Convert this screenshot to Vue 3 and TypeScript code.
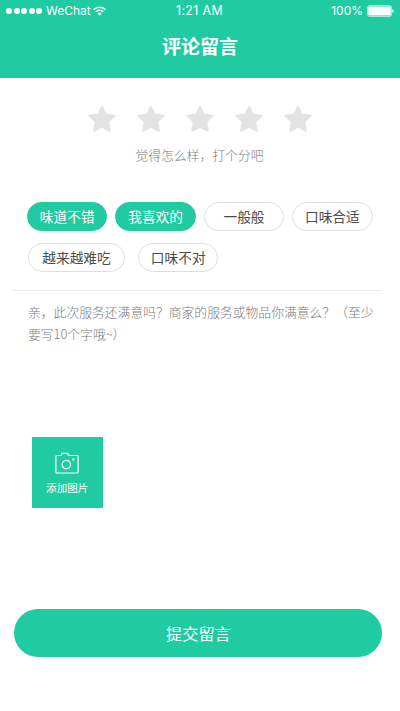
<script setup lang="ts">
import { ref } from 'vue'

interface Tag {
  label: string
  wide?: boolean
  selected: boolean
}

const score = ref<number>(0)
const stars: number[] = [1, 2, 3, 4, 5]

const tagRows = ref<Tag[][]>([
  [
    { label: '味道不错', selected: true },
    { label: '我喜欢的', selected: true },
    { label: '一般般', selected: false },
    { label: '口味合适', selected: false },
  ],
  [
    { label: '越来越难吃', wide: true, selected: false },
    { label: '口味不对', selected: false },
  ],
])

const comment = ref<string>('')
</script>

<template>
  <div class="page">
    <header class="header">
      <div class="status">
        <div class="status-left">
          <span class="signal"><i v-for="n in 5" :key="n" class="dot"></i></span>
          <span class="carrier">WeChat</span>
          <svg class="wifi" viewBox="0 0 13 10" width="13" height="10">
            <path d="M0.7 3.6 A8.2 8.2 0 0 1 12.3 3.6" fill="none" stroke="#fff" stroke-width="1.6" />
            <path d="M2.8 5.8 A5.2 5.2 0 0 1 10.2 5.8" fill="none" stroke="#fff" stroke-width="1.5" />
            <path d="M6.5 9.7 L4.4 7.5 A2.9 2.9 0 0 1 8.6 7.5 Z" fill="#fff" />
          </svg>
        </div>
        <span class="time">1:21 AM</span>
        <div class="status-right">
          <span>100%</span>
          <svg class="battery" viewBox="0 0 27 12" width="27" height="12">
            <rect x="0.5" y="0.5" width="24" height="11" rx="2" fill="none" stroke="#fff" stroke-opacity="0.6" />
            <rect x="1.2" y="1.5" width="22.6" height="9" rx="1" fill="#fff" />
            <path d="M25.3 4 Q26.6 4.6 26.6 6 T25.3 8 Z" fill="#fff" />
          </svg>
        </div>
      </div>
      <h1 class="title">评论留言</h1>
    </header>

    <section class="rating">
      <div class="stars">
        <svg
          v-for="n in stars"
          :key="n"
          class="star"
          :class="{ lit: n <= score }"
          viewBox="0 0 28 28"
          @click="score = n"
        >
          <path
            d="M14 1.8 L17.7 9.6 L26.6 10.8 L20.2 16.9 L21.8 25.8 L14 21.5 L6.2 25.8 L7.8 16.9 L1.4 10.8 L10.3 9.6 Z"
            stroke-width="2"
            stroke-linejoin="round"
          />
        </svg>
      </div>
      <p class="hint">觉得怎么样，打个分吧</p>
    </section>

    <section class="tags">
      <div v-for="(row, i) in tagRows" :key="i" class="tag-row">
        <button
          v-for="tag in row"
          :key="tag.label"
          class="tag"
          :class="{ selected: tag.selected, wide: tag.wide }"
          @click="tag.selected = !tag.selected"
        >
          {{ tag.label }}
        </button>
      </div>
    </section>

    <section class="message">
      <textarea
        v-model="comment"
        class="input"
        placeholder="亲，此次服务还满意吗？商家的服务或物品你满意么？（至少要写10个字哦~）"
      ></textarea>
    </section>

    <button class="upload">
      <svg class="camera" viewBox="0 0 24 22" width="24" height="22">
        <g fill="none" stroke="#fff" stroke-width="1.2" stroke-linejoin="round">
          <path d="M7 3.5 H2 Q0.9 3.5 0.9 4.6 V19.9 Q0.9 21 2 21 H22 Q23.1 21 23.1 19.9 V4.6 Q23.1 3.5 22 3.5 H13.5" />
          <path d="M6.6 3.5 V1.3 H13 V3.5" />
          <circle cx="11.3" cy="12.6" r="4.2" />
        </g>
        <circle cx="18.3" cy="7.4" r="1.2" fill="#fff" />
      </svg>
      <span>添加图片</span>
    </button>

    <button class="submit">提交留言</button>
  </div>
</template>

<style>
body {
  background: #fff;
}
</style>

<style scoped>
.page {
  display: flex;
  flex-direction: column;
  box-sizing: border-box;
  width: 400px;
  height: 711px;
  overflow: hidden;
  background: #fff;
  font-family: "Noto Sans CJK SC", sans-serif;
  text-spacing-trim: space-all;
}

button {
  display: flex;
  align-items: center;
  justify-content: center;
  box-sizing: border-box;
  margin: 0;
  padding: 0;
  border: 0;
  font-family: inherit;
  cursor: pointer;
}

.header {
  box-sizing: border-box;
  height: 78px;
  flex: none;
  background: #21cba1;
  border-bottom: 1px solid #1bc79b;
  color: #fff;
}

.status {
  display: grid;
  grid-template-columns: 1fr auto 1fr;
  align-items: center;
  height: 22px;
  padding: 0 6px;
  font-family: Inter, Roboto, sans-serif;
  font-size: 12px;
  line-height: 22px;
}

.time {
  font-size: 12.4px;
  letter-spacing: 0.35px;
  margin-right: 1px;
}

.status-left,
.status-right {
  display: flex;
  align-items: center;
}

.status-right {
  justify-content: flex-end;
  gap: 4px;
}

.signal {
  display: flex;
  gap: 1.5px;
  margin-right: 4px;
}

.dot {
  width: 6px;
  height: 6px;
  border-radius: 50%;
  background: #fff;
}

.wifi {
  margin-left: 2px;
}

.title {
  margin: 12px 0 0;
  font-size: 19px;
  font-weight: 700;
  line-height: 24px;
  text-align: center;
}

.rating {
  display: flex;
  flex-direction: column;
  align-items: center;
  padding-top: 27px;
}

.stars {
  display: flex;
  gap: 21px;
}

.star {
  width: 28px;
  height: 28px;
  fill: #e3e3e3;
  stroke: #e3e3e3;
}

.star.lit {
  fill: #ffc53d;
  stroke: #ffc53d;
}

.hint {
  margin: 12px 1px 1px 0;
  color: #7c7c7c;
  font-size: 12.8px;
  font-weight: 300;
  line-height: 20px;
}

.tags {
  display: flex;
  flex-direction: column;
  gap: 12px;
  padding: 36px 27px 0;
}

.tag-row {
  display: flex;
  gap: 8px;
}

.tag-row + .tag-row {
  gap: 13px;
  padding-left: 1px;
}

.tag {
  width: 80.4px;
  height: 29px;
  padding-bottom: 2px;
  border: 1px solid #dedede;
  border-radius: 15px;
  background: #fff;
  color: #4c4c4c;
  font-size: 13.7px;
  line-height: 20px;
}

.tag.wide {
  width: 97px;
}

.tag.selected {
  border-color: #21cba1;
  background: #21cba1;
  color: #fff;
}

.message {
  height: 146px;
  margin: 18px 18px 0 13px;
  border-top: 1px solid #ebebeb;
}

.input {
  display: block;
  box-sizing: border-box;
  width: 366px;
  height: 120px;
  margin: 0;
  padding: 10px 0 0 15px;
  border: 0;
  outline: 0;
  background: transparent;
  color: #555;
  font-family: inherit;
  font-size: 12.8px;
  font-weight: 300;
  line-height: 22px;
  resize: none;
  text-spacing-trim: space-all;
}

.input::placeholder {
  color: #7c7c7c;
  opacity: 1;
}

.upload {
  flex: none;
  flex-direction: column;
  gap: 6px;
  width: 70.5px;
  height: 70.5px;
  margin: 0 0 0.5px 32px;
  padding-top: 4px;
  background: #21cba1;
  color: #fff;
  font-size: 10.6px;
  line-height: 16px;
}

.submit {
  flex: none;
  width: 368px;
  height: 48px;
  margin: 101px 0 0 14.4px;
  padding-bottom: 1px;
  border-radius: 24px;
  background: #21cba1;
  color: #fff;
  font-size: 16.2px;
  line-height: 24px;
}
</style>
